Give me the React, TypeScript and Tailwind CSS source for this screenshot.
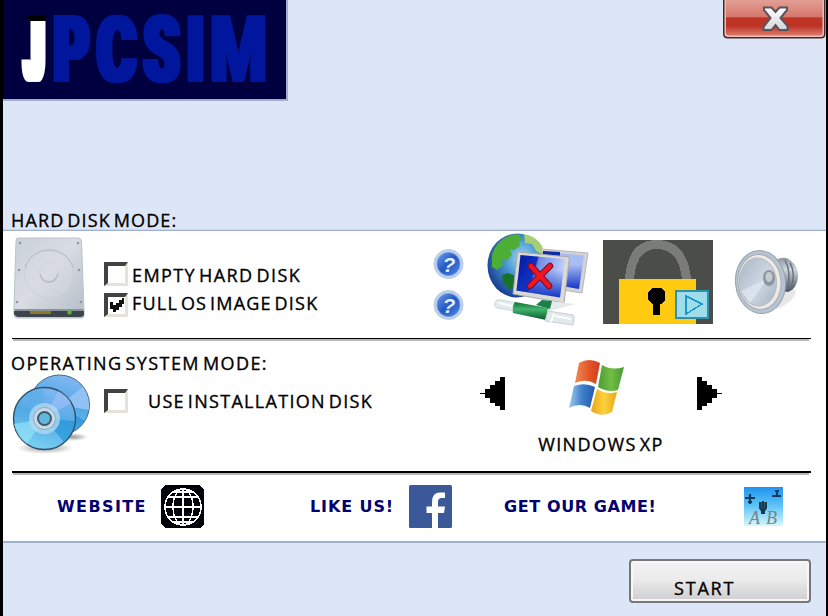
import React, { useState } from "react";

const label = "block whitespace-nowrap font-['Open_Sans','Noto_Sans',sans-serif] text-[18px] leading-[18px] font-medium text-black [word-spacing:-3px] [-webkit-text-stroke:0.35px_black]";
const link = "block whitespace-nowrap font-['DejaVu_Sans',sans-serif] text-[16px] leading-[16px] font-bold text-[#000070]";

function Logo() {
  const letters: [string, number, number, string][] = [
    ["P", 53.5, 36, "url(#wide)"],
    ["C", 97, 39, "url(#wide)"],
    ["S", 143.5, 36, "url(#wide)"],
    ["I", 187, 17, "url(#wide)"],
    ["M", 210, 57, "url(#slim)"],
  ];
  return (
    <svg width="283" height="99" viewBox="3 0 283 99" className="block overflow-visible bg-[#000040]">
      <defs>
        <filter id="slim" x="-20%" width="140%"><feMorphology operator="dilate" radius="2 1" /></filter>
        <filter id="wide" x="-40%" width="180%"><feMorphology operator="dilate" radius="3 1" /></filter>
        <filter id="wider" x="-100%" width="300%"><feMorphology operator="dilate" radius="5 1" /></filter>
      </defs>
      <g fontFamily="Roboto, sans-serif" fontWeight="900" fontSize="91">
        <text x="26" y="80" fill="#fff" filter="url(#wider)" textLength="16" lengthAdjust="spacingAndGlyphs">J</text>
        <rect x="20" y="10" width="28" height="11" fill="#000040" />
        <rect x="27" y="15" width="19" height="6" fill="#000" />
        <g fill="#00189c">
          {letters.map(([c, x, w, f]) => (
            <text key={c} x={x} y="81" filter={f} textLength={w} lengthAdjust="spacingAndGlyphs">{c}</text>
          ))}
        </g>
      </g>
    </svg>
  );
}

function Close() {
  return (
    <button className="block h-[39px] w-[103px]" aria-label="Close">
      <svg width="103" height="39" viewBox="0 0 103 39" className="block">
        <defs>
          <linearGradient id="cl" x2="0" y2="1">
            <stop offset="0" stopColor="#e5a49b" />
            <stop offset=".5" stopColor="#d5766b" />
            <stop offset=".53" stopColor="#bd3524" />
            <stop offset=".75" stopColor="#bd3426" />
            <stop offset="1" stopColor="#dc7a6c" />
          </linearGradient>
          <linearGradient id="cx" x2="0" y2="1">
            <stop offset="0" stopColor="#fff" />
            <stop offset="1" stopColor="#d5d5d5" />
          </linearGradient>
        </defs>
        <path d="M0 -2V34Q0 38.5 5 38.5H98Q102.500 38.500 102.500 34V-2Z" fill="#43282c" />
        <path d="M1.500 -2V34Q1.500 37 5 37H98Q101 37 101 34V-2Z" fill="#edbdb5" />
        <path d="M3 -2V33Q3 35.500 6 35.500H97Q99.500 35.500 99.500 33V-2Z" fill="url(#cl)" />
        <path d="M41 7.500H48.500L52.500 12L56.500 7.500H64V10L57.500 18L64.500 26V30H56.500L52.500 25L48.500 30H40.500V27L47.500 18L41 10Z" fill="url(#cx)" stroke="#555460" strokeWidth="2" />
      </svg>
    </button>
  );
}

function Check({ on, toggle, name }: { on: boolean; toggle: () => void; name: string }) {
  return (
    <button role="checkbox" aria-checked={on} aria-label={name} onClick={toggle} className="block size-6 shrink-0 border-t-4 border-r-[3px] border-b-[3px] border-l-4 border-t-[#42423f] border-r-[#e4e2d9] border-b-[#e4e2d9] border-l-[#42423f] bg-white">
      {on && (
        <svg width="17" height="17" viewBox="0 0 17 17" shapeRendering="crispEdges" className="block">
          <path d="M2 5H5V8H8V6H11V3H14V1H16V7H14V10H11V13H8V15H5V12H2Z" fill="#111" />
        </svg>
      )}
    </button>
  );
}

function HardDisk() {
  return (
    <svg width="74" height="84" viewBox="0 0 74 84" className="block">
      <defs>
        <linearGradient id="hd" x1="0" x2="1" y2="1">
          <stop offset="0" stopColor="#c9d0d7" />
          <stop offset=".45" stopColor="#d9dde3" />
          <stop offset="1" stopColor="#b5bdc7" />
        </linearGradient>
      </defs>
      <path d="M6 2H66Q69 2 69.500 5L72 74V80Q72 82 69 82H5Q2 82 2 79V73L4 5Q4 2 6 2Z" fill="url(#hd)" stroke="#bac2cb" />
      <path d="M2 75H72V79Q71 81 68 81H6Q2 80 2 77Z" fill="#3d444c" />
      <path d="M2 73H72L71 75H3Z" fill="#8a929c" />
      <path d="M18 75H39V78H18Z" fill="#8c7a24" />
      <circle cx="57.500" cy="76.500" r="2.300" fill="#52b52e" />
      <circle cx="37" cy="37.500" r="24.500" fill="#d8dce1" fillOpacity=".4" stroke="#cdd2d9" />
      <path d="M13 32A25 25 0 0 1 61 32" fill="none" stroke="#b1b9c3" />
      <circle cx="37" cy="36" r="9.500" fill="none" stroke="#d2d6dc" />
      <path d="M28 38Q30 46 37 46T46 38" fill="none" stroke="#b4bcc7" strokeWidth="1.300" />
      <g fill="#8f98a2">
        <circle cx="8" cy="7" r="1.300" /><circle cx="66" cy="7" r="1.300" />
        <circle cx="7" cy="34" r="1.300" /><circle cx="67" cy="34" r="1.300" />
        <circle cx="5" cy="66" r="1.300" /><circle cx="69" cy="66" r="1.300" />
      </g>
    </svg>
  );
}

function Help() {
  return (
    <svg width="32" height="31" viewBox="0 0 32 31" className="block">
      <defs>
        <linearGradient id="hp" x2="1" y2="1">
          <stop offset="0" stopColor="#6d9de6" />
          <stop offset=".5" stopColor="#2459c4" />
          <stop offset="1" stopColor="#4c86e4" />
        </linearGradient>
      </defs>
      <circle cx="15.500" cy="15" r="14.500" fill="#c0d3ee" stroke="#b3c8e6" />
      <circle cx="15.500" cy="15" r="11.500" fill="url(#hp)" stroke="#6f9ade" />
      <text x="16" y="22.500" textAnchor="middle" fontFamily="Liberation Sans, sans-serif" fontStyle="italic" fontWeight="700" fontSize="21" fill="#e3edfd">?</text>
    </svg>
  );
}

function Network() {
  return (
    <svg width="102" height="95" viewBox="487 232 102 95" className="block">
      <defs>
        <radialGradient id="gl" cx=".58" cy=".38" r=".65">
          <stop offset="0" stopColor="#9bd9ef" />
          <stop offset=".45" stopColor="#4795d0" />
          <stop offset="1" stopColor="#173b91" />
        </radialGradient>
        <linearGradient id="sc" x2="1" y2=".25">
          <stop offset="0" stopColor="#0618a0" />
          <stop offset=".42" stopColor="#1030c0" />
          <stop offset=".46" stopColor="#6f8ce4" />
          <stop offset="1" stopColor="#c0cffb" />
        </linearGradient>
        <linearGradient id="sh" x2="0" y2="1">
          <stop offset=".35" stopColor="#1235c4" stopOpacity="0" />
          <stop offset="1" stopColor="#1235c4" />
        </linearGradient>
        <linearGradient id="gn" x2="0" y2="1">
          <stop offset="0" stopColor="#0e6c36" />
          <stop offset=".4" stopColor="#42b46c" />
          <stop offset="1" stopColor="#08582c" />
        </linearGradient>
      </defs>
      <ellipse cx="517" cy="265.500" rx="29.500" ry="32" fill="url(#gl)" />
      <path d="M492 255Q496 241 509 236L517 234L522 238L519 242L520 246L514 250L510 249L512 255L506 261L504 258L502 262L503 265L497 270L492 267Z" fill="#4cae35" />
      <path d="M524 234Q536 236 542 246L544 256L536 251L532 244L525 243Z" fill="#a5cf72" />
      <path d="M502 275L508 273L516 276V286L510 290L503 283Z" fill="#187229" />
      <path d="M541 249L588 253L582 293L556 289Z" fill="#d3d3d5" stroke="#b9b9bd" />
      <path d="M543 251.500L584 255.500L579 289L562 286Z" fill="#a9bcf4" />
      <path d="M543 251.500L584 255.500L579 289L562 286Z" fill="url(#sh)" />
      <path d="M543 251L560 252V256H543Z" fill="#102aa3" />
      <path d="M517.500 252L569.500 257L564 303L513 294Z" fill="#dcdad7" stroke="#aaa9aa" />
      <path d="M520.500 255L565 259L560 297.500L516.500 290.500Z" fill="url(#sc)" />
      <path d="M520.500 255L565 259L560 297.500L516.500 290.500Z" fill="url(#sh)" />
      <path d="M531 266L549 286M550 266L530 286" stroke="#7e0b26" strokeWidth="6.500" strokeLinecap="round" />
      <path d="M531 266L549 286M550 266L530 286" stroke="#ee1620" strokeWidth="4.500" strokeLinecap="round" />
      <path d="M537 302L550 301L576 304L550 311Z" fill="#e7eaea" />
      <path d="M536 305L542 300L552 301L550 309Z" fill="#198148" />
      <path d="M495 303Q496 299 500 300L517 303L515 311L498 308Q494 308 495 303Z" fill="#e4ebeb" stroke="#ccd5d8" />
      <path d="M515 302L548 308L546 320L513 313Q512 306 515 302Z" fill="url(#gn)" />
      <path d="M548 311L573 315Q575 316 573 325L545 321Z" fill="#e1e9ea" stroke="#c8d0d3" />
      <path d="M554 313L551 322M499 303L512 306M555 316L571 319" stroke="#fff" strokeWidth="2" />
    </svg>
  );
}

function Lock() {
  return (
    <svg width="110" height="84" viewBox="0 0 110 84" shapeRendering="crispEdges" className="block bg-[#4b4d48]">
      <path d="M26.500 39Q29 4 54.500 4.500T83.500 39" fill="none" stroke="#7b7c78" strokeWidth="9" />
      <path d="M16 39H93V84H16Z" fill="#ffca10" />
      <path d="M49 48H58L62 52V61L58 64H57V75H50V64H49L45 60V52Z" fill="#000" />
      <path d="M73 51H105V78H73Z" fill="#a0dce9" stroke="#2b93ae" strokeWidth="2" />
      <path d="M83 56V74L99 64Z" fill="none" stroke="#159bc7" strokeWidth="1.500" />
    </svg>
  );
}

function Speaker() {
  return (
    <svg width="66" height="66" viewBox="734 249 66 66" className="block">
      <defs>
        <linearGradient id="bk" x2="0" y2="1">
          <stop offset="0" stopColor="#8d969f" />
          <stop offset=".35" stopColor="#d0d8df" />
          <stop offset="1" stopColor="#454e57" />
        </linearGradient>
        <linearGradient id="cn" x2="1" y2="1">
          <stop offset="0" stopColor="#aab6c5" />
          <stop offset=".55" stopColor="#ccd6e3" />
          <stop offset="1" stopColor="#a6b1be" />
        </linearGradient>
      </defs>
      <ellipse cx="783" cy="299" rx="15" ry="6" fill="#e7e7e7" transform="rotate(-35 783 299)" />
      <path d="M774 261Q784 255 790 260Q799 267 798 277Q797 289 788 292L778 290Z" fill="url(#bk)" />
      <path d="M785 260Q792 273 787 290M790 263Q796 273 791 289" fill="none" stroke="#68737e" strokeWidth="1.500" />
      <ellipse cx="760.500" cy="282" rx="25" ry="31.500" transform="rotate(-5 761 282)" fill="#b5c3d2" stroke="#98a2ad" />
      <ellipse cx="759.500" cy="282" rx="21.500" ry="27.500" transform="rotate(-5 759 282)" fill="#eee9e4" stroke="#a5acb4" />
      <ellipse cx="758" cy="282" rx="18.500" ry="24" transform="rotate(-5 758 282)" fill="url(#cn)" stroke="#b4bcc5" />
      <path d="M768 278L741 291L750 303Z" fill="#e1e8f1" opacity=".7" />
      <ellipse cx="769" cy="278" rx="6" ry="8" fill="#8d969f" />
      <ellipse cx="769" cy="277" rx="3.500" ry="5" fill="#c5cbd1" />
    </svg>
  );
}

function Discs() {
  return (
    <svg width="80" height="82" viewBox="12 373 80 82" className="block">
      <defs>
        <linearGradient id="dc" x1=".7" y1="0" x2=".4" y2="1">
          <stop offset="0" stopColor="#84b8f2" />
          <stop offset=".5" stopColor="#51a9e5" />
          <stop offset="1" stopColor="#7bd1f2" />
        </linearGradient>
        <radialGradient id="ds">
          <stop offset="0" stopColor="#999" />
          <stop offset="1" stopColor="#fff" />
        </radialGradient>
      </defs>
      <ellipse cx="45" cy="448" rx="28" ry="6" fill="url(#ds)" />
      <ellipse cx="73" cy="437" rx="15" ry="4" fill="url(#ds)" />
      <circle cx="59.500" cy="405" r="30" fill="url(#dc)" stroke="#4d6b81" />
      <path d="M60 405L83 387Q90 398 89 410Z" fill="#9fc6f7" opacity=".8" />
      <path d="M60 405L85 421L75 431Z" fill="#1c8ad6" opacity=".6" />
      <circle cx="44.500" cy="418.500" r="31" fill="url(#dc)" stroke="#2f5068" strokeWidth="1.400" />
      <path d="M44.500 418.500L25 395Q34 388 44 388Z" fill="#56aee8" opacity=".6" />
      <path d="M44.500 418.500L58 391Q66 394 71 403Z" fill="#a4bff8" opacity=".6" />
      <path d="M44.500 418.500L75 421Q72 435 64 442Z" fill="#1f91d9" opacity=".6" />
      <path d="M44.500 418.500L14 424Q17 437 27 444Z" fill="#99e8fa" opacity=".6" />
      <circle cx="44.500" cy="418.500" r="15.500" fill="#b5dbf2" opacity=".75" />
      <circle cx="44.500" cy="418.500" r="11" fill="#c7dae6" stroke="#8ba9bc" />
      <circle cx="44.500" cy="418.500" r="6.500" fill="#5eb8df" stroke="#41596a" strokeWidth="2" />
    </svg>
  );
}

function Arrow({ right }: { right?: boolean }) {
  return (
    <button aria-label={right ? "Next" : "Previous"} className="block">
      <svg width="25" height="33" viewBox="0 0 25 33" shapeRendering="crispEdges" className={right ? "block -scale-x-100" : "block"}>
        <path d="M20 0H25V33H20V29H15V26H10V21H5V17H0V16H5V12H10V8H15V4H20Z" />
      </svg>
    </button>
  );
}

function Windows() {
  return (
    <svg width="56" height="56" viewBox="569 360 56 56" className="mr-2 block">
      <defs>
        <linearGradient id="wr"><stop stopColor="#f08a55" /><stop offset=".6" stopColor="#e25226" /><stop offset="1" stopColor="#ce3f1d" /></linearGradient>
        <linearGradient id="wg"><stop stopColor="#4d9d35" /><stop offset=".5" stopColor="#72bd45" /><stop offset="1" stopColor="#479b32" /></linearGradient>
        <linearGradient id="wb"><stop stopColor="#a1caef" /><stop offset=".5" stopColor="#3f80cb" /><stop offset="1" stopColor="#2458ab" /></linearGradient>
        <linearGradient id="wy"><stop stopColor="#e9a51b" /><stop offset=".5" stopColor="#fcd23a" /><stop offset="1" stopColor="#e6a919" /></linearGradient>
      </defs>
      <path d="M579 363Q589 357 600 363L596 384Q586 378 575 383Z" fill="url(#wr)" />
      <path d="M602 365Q612 371 624 367L618 390Q608 393 598 387Z" fill="url(#wg)" />
      <path d="M574 386Q585 382 595 387L590 408Q580 402 569 408Z" fill="url(#wb)" />
      <path d="M597 389Q607 395 617 392L612 412Q602 418 591 411Z" fill="url(#wy)" />
    </svg>
  );
}

function Globe() {
  return (
    <svg width="43" height="43" viewBox="0 0 43 43" className="block" shapeRendering="crispEdges">
      <path d="M4 0H38L43 4V39L39 43H4L0 39V4Z" fill="#000008" />
      <g fill="none" stroke="#fff" strokeWidth="1.500">
        <circle cx="22" cy="22" r="18" />
        <ellipse cx="22" cy="22" rx="10" ry="18" />
        <path d="M22 4V40M4 22H40M7 12H37M7 32H37M13 7H31M13 37H31" />
      </g>
    </svg>
  );
}

function Facebook() {
  return (
    <svg width="43" height="43" viewBox="0 0 43 43" className="block">
      <rect width="43" height="43" rx="1.500" fill="#3b5998" />
      <path d="M23 43V28H17.500V21.500H23V17Q23 7.500 31 7.500H36V13H32.500Q29 13 29 17V21.500H36L35 28H29V43Z" fill="#fff" />
    </svg>
  );
}

function Game() {
  return (
    <svg width="39" height="39" viewBox="0 0 39 39" className="block">
      <defs>
        <linearGradient id="gm" x2="0" y2="1"><stop stopColor="#1d93f0" /><stop offset=".5" stopColor="#62c5f6" /><stop offset="1" stopColor="#d9f7fb" /></linearGradient>
      </defs>
      <rect width="39" height="39" fill="url(#gm)" />
      <path d="M6 7V17M1 11H11M4 15H8M33 3V10M28 9H37M31 4H35" stroke="#143b59" strokeWidth="2.200" />
      <path d="M16 15V21L18 24V26H20V24L22 21V15M19 14V24" stroke="#183c50" strokeWidth="2" fill="#2c5367" />
      <g fontFamily="Liberation Serif, serif" fontStyle="italic" fontSize="18" fill="#71868c">
        <text x="5" y="37">A</text>
        <text x="22" y="37">B</text>
      </g>
    </svg>
  );
}

function Rule({ thick }: { thick?: boolean }) {
  return (
    <div className="ml-[9px] w-[799px]">
      <div className={thick ? "h-0.5 bg-black" : "h-px bg-black"} />
      <div className="ml-px h-0.5 w-[796px] bg-[#b8b8b8]" />
    </div>
  );
}

export default function App() {
  const [image, setImage] = useState(true);
  const [install, setInstall] = useState(false);
  return (
    <div className="h-[616px] w-[828px] overflow-hidden bg-black pr-0.5 pl-[3px]">
      <main className="flex h-full flex-col bg-[#dce6f7]">
        <header className="flex h-[229px] flex-col justify-between">
          <div className="flex items-start justify-between">
            <div className="border-r-2 border-b-2 border-[#a3aecb]"><Logo /></div>
            <Close />
          </div>
          <h2 className={`${label} ml-2 tracking-[1.15px]`}>HARD DISK MODE:</h2>
        </header>
        <div className="h-0.5 border-b border-[#9fb2cd] bg-[#cbd9ee]" />

        <section className="flex h-[310px] flex-col bg-white">
          <div className="flex h-[107px] items-start">
            <div className="mt-[5px] ml-[9px]"><HardDisk /></div>
            <div className="mt-[31px] ml-[18px] flex w-[329px] flex-col gap-[7px]">
              <div className="flex gap-1">
                <Check on={!image} toggle={() => setImage(!image)} name="Empty hard disk" />
                <span className={`${label} mt-1 tracking-[1.4px]`}>EMPTY HARD DISK</span>
              </div>
              <div className="flex gap-1">
                <Check on={image} toggle={() => setImage(!image)} name="Full OS image disk" />
                <span className={`${label} mt-px tracking-[1.2px]`}>FULL OS IMAGE DISK</span>
              </div>
            </div>
            <div className="mt-[18px] flex flex-col gap-[10px]"><Help /><Help /></div>
            <div className="mt-px ml-[22px]"><Network /></div>
            <div className="mt-[9px] ml-[14px]"><Lock /></div>
            <div className="mt-[18px] ml-[21px]"><Speaker /></div>
          </div>
          <Rule />
          <div className="flex h-[130px] items-start">
            <div className="mt-[13px] ml-2 w-[93px]">
              <h2 className={`${label} tracking-[1.4px]`}>OPERATING SYSTEM MODE:</h2>
              <div className="mt-px ml-px"><Discs /></div>
            </div>
            <div className="mt-12 flex w-[376px] gap-5">
              <Check on={install} toggle={() => setInstall(!install)} name="Use installation disk" />
              <span className={`${label} mt-[3px] tracking-[1.3px]`}>USE INSTALLATION DISK</span>
            </div>
            <div className="mt-9"><Arrow /></div>
            <div className="mt-[19px] flex w-[192px] flex-col items-center">
              <Windows />
              <span className={`${label} mt-[19px] tracking-[1.4px]`}>WINDOWS XP</span>
            </div>
            <div className="mt-9"><Arrow right /></div>
          </div>
          <Rule thick />
          <div className="flex h-[66px] items-start pl-[54px]">
            <span className={`${link} mt-[24px] w-[104px] tracking-[1.4px]`}>WEBSITE</span>
            <div className="mt-[10px] w-[149px]"><Globe /></div>
            <span className={`${link} mt-[24px] w-[99px] tracking-[0.9px]`}>LIKE US!</span>
            <div className="mt-[10px] w-[94px]"><Facebook /></div>
            <span className={`${link} mt-[24px] ml-px w-[240px] tracking-[0.6px]`}>GET OUR GAME!</span>
            <div className="mt-3"><Game /></div>
          </div>
        </section>

        <footer className="flex h-[75px] items-start justify-end border-t-2 border-[#9fb2cd] pr-[15px]">
          <button className="mt-4 flex h-11 w-[182px] items-start rounded-[4px] border-2 border-[#77777b] bg-linear-to-b from-[#f1f1f1] from-0% via-[#ececec] via-45% to-[#cfcdcf] shadow-[inset_0_0_0_2px_#f8f8f8]">
            <span className={`${label} mt-[18px] ml-[43px] tracking-[1.8px]`}>START</span>
          </button>
        </footer>
      </main>
    </div>
  );
}
